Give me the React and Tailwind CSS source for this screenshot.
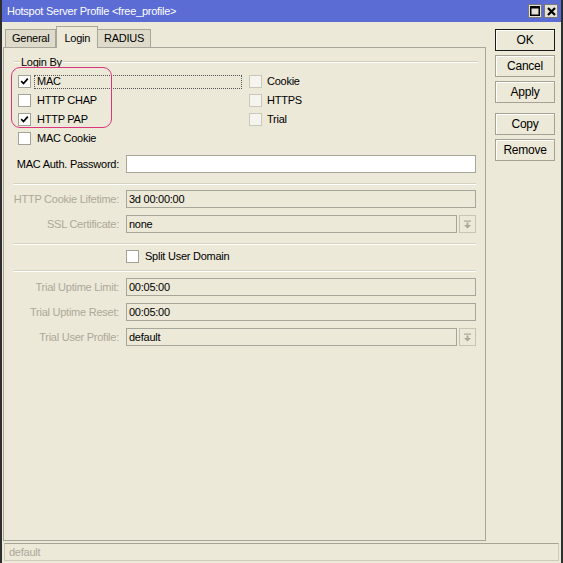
import React from 'react';

const Check = ({ checked, dim }) => (
  <span
    className={
      dim
        ? 'w-[13px] h-[13px] shrink-0 border border-[#cac8bb] bg-[#f5f4ef] flex items-center justify-center'
        : 'w-[13px] h-[13px] shrink-0 border border-[#a3a298] bg-white flex items-center justify-center'
    }
  >
    {checked && (
      <svg width="9" height="9" viewBox="0 0 9 9">
        <path d="M1.2 4.2 L3.5 6.6 L7.8 1.6" stroke="#000" strokeWidth="1.7" fill="none" />
      </svg>
    )}
  </span>
);

const DropArrow = () => (
  <svg width="9" height="9" viewBox="0 0 9 9">
    <rect x="1" y="0.5" width="7" height="1.2" fill="#a9a796" />
    <rect x="3.6" y="2.5" width="1.8" height="2.5" fill="#a9a796" />
    <path d="M1 5 H8 L4.5 8.5 Z" fill="#a9a796" />
  </svg>
);

const Separator = ({ className }) => (
  <div className={`ml-[9px] mr-[9px] h-[2px] border-t border-[#d6d3c2] border-b border-b-white ${className}`} />
);

const FieldRow = ({ label, value, disabled, dropdown, white, className }) => (
  <div className={`flex items-center h-[18px] ${className}`}>
    <div
      className={
        disabled
          ? 'w-[115px] text-right whitespace-nowrap text-[#aca899]'
          : 'w-[115px] text-right whitespace-nowrap text-black'
      }
    >
      {label}
    </div>
    <div className="ml-[7px] w-[350px] h-[18px] flex gap-[2px]">
      <div
        className={
          white
            ? 'flex-1 h-full border border-[#a7a69a] bg-white flex items-center pl-[2px]'
            : 'flex-1 h-full border border-[#a7a69a] bg-[#ece9d8] flex items-center pl-[2px]'
        }
      >
        {value}
      </div>
      {dropdown && (
        <div className="w-[17px] h-full border border-[#c6c4b5] flex items-center justify-center">
          <DropArrow />
        </div>
      )}
    </div>
  </div>
);

const Btn = ({ children, primary, className }) => (
  <div
    className={
      primary
        ? `h-[22px] border border-[#1a1a1a] bg-[#ece9d8] flex items-center justify-center shadow-[inset_1px_1px_0_#fff] ${className}`
        : `h-[22px] border border-[#a5a293] bg-[#ece9d8] flex items-center justify-center shadow-[inset_1px_1px_0_#fff] ${className}`
    }
  >
    {children}
  </div>
);

export default function App() {
  return (
    <div className="w-[563px] h-[563px] bg-[#ece9d8] border-l-2 border-r-2 border-[#2e2e2e] flex flex-col text-[11px] tracking-[-0.25px] text-black font-['Liberation_Sans',Arial,sans-serif] overflow-hidden">
      {/* Title bar */}
      <div className="h-[22px] shrink-0 bg-[#5b6cd4] flex items-center justify-between pl-[5px] pr-[3px] text-white">
        <span>Hotspot Server Profile &lt;free_profile&gt;</span>
        <div className="flex gap-[2px]">
          <div className="w-[14px] h-[14px] bg-[#e4e2d8] border border-[#7a7a7a] flex items-center justify-center">
            <svg width="10" height="10" viewBox="0 0 10 10">
              <rect x="0.75" y="0.75" width="8.5" height="8.5" fill="none" stroke="#000" strokeWidth="1.5" />
              <rect x="0" y="0" width="10" height="2.5" fill="#000" />
            </svg>
          </div>
          <div className="w-[14px] h-[14px] bg-[#e4e2d8] border border-[#7a7a7a] flex items-center justify-center">
            <svg width="9" height="9" viewBox="0 0 9 9">
              <path d="M1 1 L8 8 M8 1 L1 8" stroke="#000" strokeWidth="2.2" />
            </svg>
          </div>
        </div>
      </div>

      {/* Body */}
      <div className="flex flex-1 pt-[5px]">
        {/* Tabs + panel */}
        <div className="ml-[1px] w-[483px] flex flex-col">
          <div className="h-[20px] flex items-end pl-[2px] relative z-10">
            <div className="h-[18px] px-[6px] flex items-center border border-b-0 border-[#a8a69a] bg-[#dedbca]">General</div>
            <div className="h-[22px] -mb-[1px] px-[7px] flex items-start pt-[3px] border border-b-0 border-[#a8a69a] bg-[#ece9d8]">Login</div>
            <div className="h-[18px] px-[6px] flex items-center border border-b-0 border-l-0 border-[#a8a69a] bg-[#dedbca]">RADIUS</div>
          </div>
          <div className="h-[494px] border border-[#a8a69a] relative">
            {/* Login By group */}
            <div className="mt-[8px] pl-[10px] pr-[7px] h-[12px] flex items-center">
              <div className="w-[6px] h-[2px] border-t border-[#d0cdbc] border-b border-b-white" />
              <span className="px-[1px]">Login By</span>
              <div className="flex-1 h-[2px] border-t border-[#d0cdbc] border-b border-b-white" />
            </div>
            <div className="mt-[4px] ml-[14px] grid grid-cols-[231px_1fr] grid-rows-[19px_19px_19px_19px]">
              <div className="flex items-center">
                <Check checked />
                <span className="ml-[3px] flex-1 mr-[7px] h-[14px] pl-[2px] flex items-center border border-dotted border-[#555]">MAC</span>
              </div>
              <div className="flex items-center">
                <Check dim />
                <span className="ml-[5px]">Cookie</span>
              </div>
              <div className="flex items-center">
                <Check />
                <span className="ml-[6px]">HTTP CHAP</span>
              </div>
              <div className="flex items-center">
                <Check dim />
                <span className="ml-[5px]">HTTPS</span>
              </div>
              <div className="flex items-center">
                <Check checked />
                <span className="ml-[6px]">HTTP PAP</span>
              </div>
              <div className="flex items-center">
                <Check dim />
                <span className="ml-[5px]">Trial</span>
              </div>
              <div className="flex items-center">
                <Check />
                <span className="ml-[6px]">MAC Cookie</span>
              </div>
            </div>

            {/* annotation */}
            <div className="absolute left-[7px] top-[19px] w-[101px] h-[61px] border-[1.5px] border-[#db3580] rounded-[9px] pointer-events-none" />

            <FieldRow className="mt-[7px]" label="MAC Auth. Password:" value="" white />
            <Separator className="mt-[10px]" />
            <FieldRow className="mt-[5px]" label="HTTP Cookie Lifetime:" value="3d 00:00:00" disabled />
            <FieldRow className="mt-[7px]" label="SSL Certificate:" value="none" disabled dropdown />
            <Separator className="mt-[10px]" />
            <div className="mt-[2px] h-[19px] flex items-center pl-[122px]">
              <Check />
              <span className="ml-[6px]">Split User Domain</span>
            </div>
            <Separator className="mt-[4px]" />
            <FieldRow className="mt-[6px]" label="Trial Uptime Limit:" value="00:05:00" disabled />
            <FieldRow className="mt-[7px]" label="Trial Uptime Reset:" value="00:05:00" disabled />
            <FieldRow className="mt-[7px]" label="Trial User Profile:" value="default" disabled dropdown />
          </div>
        </div>

        {/* Buttons */}
        <div className="ml-[9px] w-[60px] flex flex-col pt-[2px] text-[12px]">
          <Btn primary>OK</Btn>
          <Btn className="mt-[4px]">Cancel</Btn>
          <Btn className="mt-[4px]">Apply</Btn>
          <Btn className="mt-[10px]">Copy</Btn>
          <Btn className="mt-[4px]">Remove</Btn>
        </div>
      </div>

      {/* Status bar */}
      <div className="mt-[2px] mb-[2px] ml-[2px] w-[555px] h-[18px] shrink-0 border border-[#cdcabb] border-t-[#a6a595] flex items-center pl-[4px] text-[#aca899]">
        default
      </div>
    </div>
  );
}
